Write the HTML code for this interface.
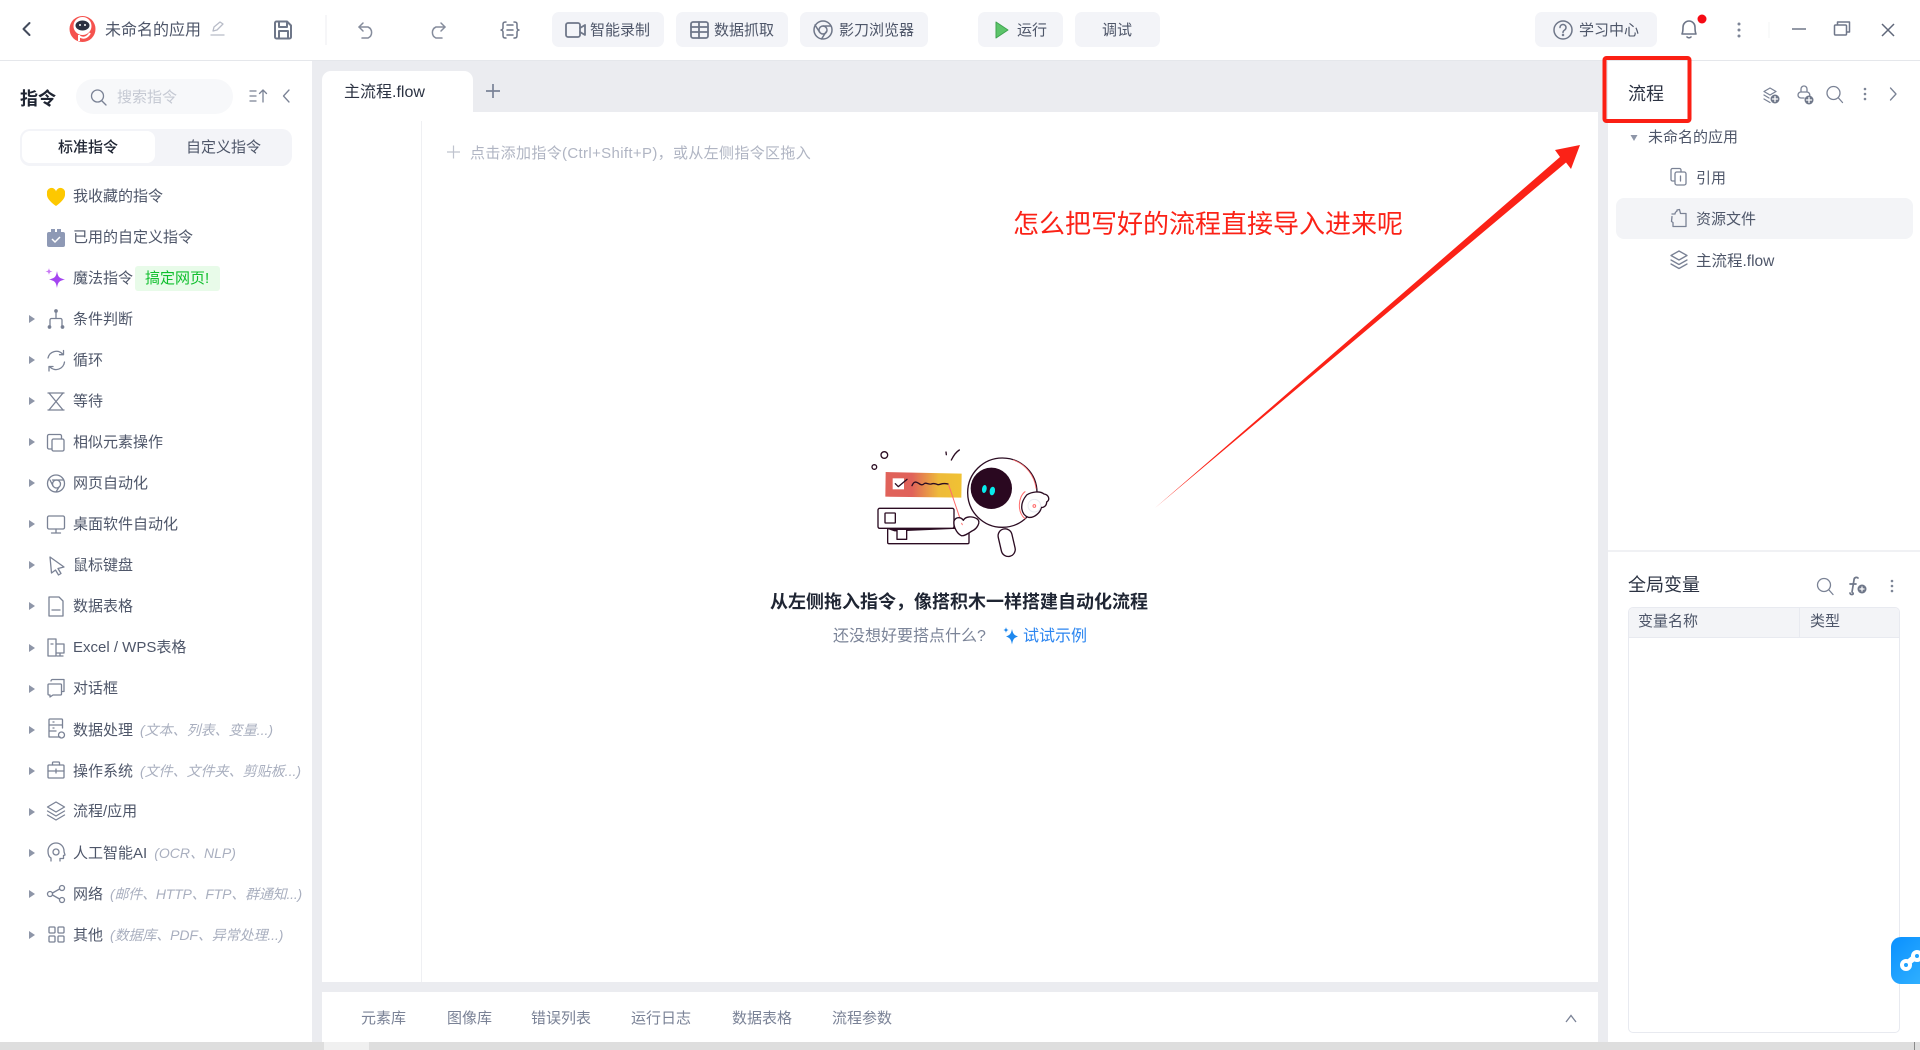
<!DOCTYPE html>
<html lang="zh">
<head>
<meta charset="utf-8">
<title>未命名的应用</title>
<style>
html,body{margin:0;padding:0;width:1920px;height:1050px;overflow:hidden;background:#ebecf0;font-family:"Liberation Sans","Noto Sans CJK SC",sans-serif;color:#4e5669}
.b{position:absolute}
.t{position:absolute;white-space:nowrap;line-height:24px;font-size:15px;margin-top:1px}
.btn{position:absolute;top:12px;height:35px;background:#f3f4f8;border-radius:7px}
.r{position:absolute;left:73px;white-space:nowrap;line-height:40px;height:40px;font-size:15px;color:#4e5669;margin-top:1px}
.r i{font-size:14px;color:#a9afbf;margin-left:7px;font-style:italic}
.tri{position:absolute;left:29px;width:0;height:0;border-left:6px solid #8e96a8;border-top:4.5px solid transparent;border-bottom:4.5px solid transparent}
svg.o{position:absolute;left:0;top:0}
.s{fill:none;stroke:#7a8295;stroke-width:1.3;stroke-linecap:round;stroke-linejoin:round}
</style>
</head>
<body>
<!-- panels -->
<div class="b" style="left:0;top:0;width:1920px;height:60px;background:#fff"></div>
<div class="b" style="left:0;top:60px;width:1920px;height:1px;background:#e5e7eb"></div>
<div class="b" style="left:0;top:61px;width:312px;height:981px;background:#fff"></div>
<div class="b" style="left:322px;top:71px;width:151px;height:45px;background:#fff;border-radius:9px 9px 0 0"></div>
<div class="b" style="left:322px;top:112px;width:1276px;height:870px;background:#fff"></div>
<div class="b" style="left:421px;top:121px;width:1px;height:861px;background:#eff0f3"></div>
<div class="b" style="left:322px;top:992px;width:1276px;height:50px;background:#fff"></div>
<div class="b" style="left:1608px;top:61px;width:312px;height:981px;background:#fff"></div>
<div class="b" style="left:1608px;top:550px;width:312px;height:2px;background:#f0f1f4"></div>
<div class="b" style="left:0;top:1042px;width:1920px;height:8px;background:#dedede"></div>
<div class="b" style="left:324px;top:1042px;width:45px;height:8px;background:#f0f0f0"></div>
<div class="b" style="left:1914px;top:1042px;width:1px;height:8px;background:#8a8a8a"></div>

<!-- header buttons -->
<div class="btn" style="left:552px;width:112px"></div>
<div class="btn" style="left:676px;width:112px"></div>
<div class="btn" style="left:800px;width:128px"></div>
<div class="btn" style="left:978px;width:85px"></div>
<div class="btn" style="left:1075px;width:85px"></div>
<div class="btn" style="left:1535px;width:122px"></div>
<div class="t" style="left:105px;top:18px;font-size:16px;color:#4e5669">未命名的应用</div>
<div class="t" style="left:590px;top:18px">智能录制</div>
<div class="t" style="left:714px;top:18px">数据抓取</div>
<div class="t" style="left:839px;top:18px">影刀浏览器</div>
<div class="t" style="left:1017px;top:18px">运行</div>
<div class="t" style="left:1102px;top:18px">调试</div>
<div class="t" style="left:1579px;top:18px">学习中心</div>

<!-- left panel -->
<div class="t" style="left:20px;top:86px;font-size:18px;font-weight:700;color:#1f2533">指令</div>
<div class="b" style="left:76px;top:79px;width:157px;height:35px;border-radius:18px;background:#f7f8fa"></div>
<div class="t" style="left:117px;top:85px;color:#c5c9d3">搜索指令</div>
<div class="b" style="left:20px;top:129px;width:272px;height:37px;border-radius:10px;background:#f3f4f8"></div>
<div class="b" style="left:22px;top:131px;width:133px;height:32px;border-radius:8px;background:#fff"></div>
<div class="t" style="left:58px;top:135px;font-weight:500;color:#1f2533">标准指令</div>
<div class="t" style="left:186px;top:135px">自定义指令</div>

<div class="r" style="top:176px">我收藏的指令</div>
<div class="r" style="top:217px">已用的自定义指令</div>
<div class="r" style="top:258px">魔法指令</div>
<div class="b" style="left:135px;top:266px;width:85px;height:25px;background:#e8fbe9;border-radius:3px"></div>
<div class="t" style="left:145px;top:266px;color:#0fbf2d">搞定网页!</div>
<div class="r" style="top:299px">条件判断</div>
<div class="r" style="top:340px">循环</div>
<div class="r" style="top:381px">等待</div>
<div class="r" style="top:422px">相似元素操作</div>
<div class="r" style="top:463px">网页自动化</div>
<div class="r" style="top:504px">桌面软件自动化</div>
<div class="r" style="top:545px">鼠标键盘</div>
<div class="r" style="top:586px">数据表格</div>
<div class="r" style="top:627px">Excel / WPS表格</div>
<div class="r" style="top:668px">对话框</div>
<div class="r" style="top:709px">数据处理<i>(文本、列表、变量...)</i></div>
<div class="r" style="top:750px">操作系统<i>(文件、文件夹、剪贴板...)</i></div>
<div class="r" style="top:791px">流程/应用</div>
<div class="r" style="top:832px">人工智能AI<i>(OCR、NLP)</i></div>
<div class="r" style="top:873px">网络<i style="letter-spacing:-.2px">(邮件、HTTP、FTP、群通知...)</i></div>
<div class="r" style="top:914px">其他<i style="letter-spacing:-.1px">(数据库、PDF、异常处理...)</i></div>

<div class="tri" style="top:315px"></div><div class="tri" style="top:356px"></div><div class="tri" style="top:397px"></div><div class="tri" style="top:438px"></div><div class="tri" style="top:479px"></div><div class="tri" style="top:520px"></div><div class="tri" style="top:561px"></div><div class="tri" style="top:602px"></div><div class="tri" style="top:644px"></div><div class="tri" style="top:685px"></div><div class="tri" style="top:726px"></div><div class="tri" style="top:767px"></div><div class="tri" style="top:808px"></div><div class="tri" style="top:849px"></div><div class="tri" style="top:890px"></div><div class="tri" style="top:931px"></div>

<!-- canvas -->
<div class="t" style="left:344px;top:80px;font-size:16px;color:#2b3242">主流程.flow</div>
<div class="t" style="left:470px;top:141px;color:#b0b5c3;letter-spacing:.34px">点击添加指令(Ctrl+Shift+P)，或从左侧指令区拖入</div>
<div class="t" style="left:770px;top:589px;font-size:18px;font-weight:700;color:#1f2533">从左侧拖入指令，像搭积木一样搭建自动化流程</div>
<div class="t" style="left:833px;top:624px;font-size:16px;color:#7b8498">还没想好要搭点什么?</div>
<div class="t" style="left:1023px;top:624px;font-size:16px;color:#2b85f0">试试示例</div>
<div class="t" style="left:1013px;top:206px;font-size:26px;line-height:34px;color:#fb2217">怎么把写好的流程直接导入进来呢</div>

<div class="t" style="left:361px;top:1006px;color:#7a8296">元素库</div>
<div class="t" style="left:447px;top:1006px;color:#7a8296">图像库</div>
<div class="t" style="left:531px;top:1006px;color:#7a8296">错误列表</div>
<div class="t" style="left:631px;top:1006px;color:#7a8296">运行日志</div>
<div class="t" style="left:732px;top:1006px;color:#7a8296">数据表格</div>
<div class="t" style="left:832px;top:1006px;color:#7a8296">流程参数</div>

<!-- right panel -->
<div class="t" style="left:1628px;top:81px;font-size:18px;color:#2b3242">流程</div>
<div class="b" style="left:1616px;top:198px;width:297px;height:41px;background:#f3f4f7;border-radius:8px"></div>
<div class="t" style="left:1648px;top:125px">未命名的应用</div>
<div class="t" style="left:1696px;top:166px">引用</div>
<div class="t" style="left:1696px;top:207px">资源文件</div>
<div class="t" style="left:1696px;top:249px;font-size:15.5px">主流程.flow</div>
<div class="t" style="left:1628px;top:572px;font-size:18px;color:#2b3242">全局变量</div>
<div class="b" style="left:1628px;top:607px;width:270px;height:424px;border:1px solid #e8eaf0;border-radius:5px;background:#fff;overflow:hidden">
  <div class="b" style="left:0;top:0;width:270px;height:29px;background:#f3f4f7;border-bottom:1px solid #e8eaf0"></div>
  <div class="b" style="left:170px;top:0;width:1px;height:29px;background:#e8eaf0"></div>
</div>
<div class="t" style="left:1638px;top:609px">变量名称</div>
<div class="t" style="left:1810px;top:609px">类型</div>
<div class="b" style="left:1891px;top:937px;width:29px;height:47px;border-radius:10px 0 0 10px;background:linear-gradient(135deg,#0a90ff,#2fafff)"></div>

<!-- icon overlay -->
<svg class="o" width="1920" height="1050" viewBox="0 0 1920 1050" xmlns="http://www.w3.org/2000/svg">
<defs>
<linearGradient id="g1" x1="0" x2="1" y1="0" y2="0"><stop offset="0.35" stop-color="#e0625a"/><stop offset="0.7" stop-color="#eeba3a"/><stop offset="1" stop-color="#f0c233"/></linearGradient>
</defs>

<!-- header -->
<path d="M29.5 23L23.5 29L29.5 35" fill="none" stroke="#434b5c" stroke-width="2" stroke-linecap="round" stroke-linejoin="round"/>
<g>
  <circle cx="82.5" cy="29" r="13" fill="#f5524e"/>
  <circle cx="82.5" cy="26" r="9" fill="#fff"/>
  <ellipse cx="82.5" cy="25.5" rx="7" ry="5" fill="#2b3040"/>
  <circle cx="80" cy="25" r="1" fill="#fff"/><circle cx="85" cy="25" r="1" fill="#fff"/>
  <path d="M79 35v6M79 36c4 3 8 2 11-3" fill="none" stroke="#fff" stroke-width="2"/>
</g>
<g class="s" style="stroke:#b8bcc8;stroke-width:1.3"><path d="M213 31l1-4 6-5 3 2-6 6z"/><path d="M211 35h13"/></g>
<g class="s" style="stroke-width:2;stroke:#6f7789"><path d="M275 23a1.5 1.5 0 0 1 1.5-1.5H287l4 4V37a1.500 1.500 0 0 1-1.500 1.500h-13A1.500 1.500 0 0 1 275 37z"/><path d="M279 22v5h8v-5M279 38v-7h9v7"/></g>
<path d="M326 15V45" stroke="#eceef1" stroke-width="1"/>
<g class="s" style="stroke:#858c9c;stroke-width:1.500" transform="translate(2 0)"><path d="M361 23l-4 4 4 4"/><path d="M357 27h9a6 6 0 0 1 0 11h-6"/></g>
<g class="s" style="stroke:#858c9c;stroke-width:1.500" transform="translate(-2 0)"><path d="M443 23l4 4-4 4"/><path d="M447 27h-9a6 6 0 0 0 0 11h6"/></g>
<g class="s" style="stroke:#6f7789;stroke-width:1.500"><path d="M506 22c-3 0-3 1-3 3v3c0 1-1 2-2 2 1 0 2 1 2 2v3c0 2 0 3 3 3M514 22c3 0 3 1 3 3v3c0 1 1 2 2 2-1 0-2 1-2 2v3c0 2 0 3-3 3"/><path d="M507 25h6M507 30h6M507 35h6"/></g>
<g class="s" style="stroke-width:1.800;stroke:#6f7789"><rect x="566" y="23" width="14" height="14" rx="2"/><path d="M580 28l5-3v10l-5-3"/></g>
<g class="s" style="stroke-width:1.800;stroke:#6f7789"><rect x="691" y="22" width="17" height="16" rx="2"/><path d="M691 27h17M691 32h17M699 22v16"/></g>
<g class="s" style="stroke:#6f7789;stroke-width:1.500"><circle cx="823" cy="30" r="9"/><circle cx="823" cy="30" r="4"/><path d="M823 26h8M819.500 32l-4.500-7M826 32l-4.500 7"/></g>
<path d="M996 22v16l12-8z" fill="#5cc46a" stroke="#3fa350" stroke-width="1" stroke-linejoin="round"/>
<g class="s" style="stroke:#6f7789;stroke-width:1.500"><circle cx="1563" cy="30" r="9"/><path d="M1560 27.500a3 3 0 1 1 4.500 2.600c-1 .6-1.500 1-1.500 2.400"/><circle cx="1563" cy="35" r=".5"/></g>
<g class="s" style="stroke-width:1.600;stroke:#6f7789"><path d="M1682 34c1-2 1-4 1-7a6 6 0 0 1 12 0c0 3 0 5 1 7z"/><path d="M1687 37a2.500 2 0 0 0 4 0"/></g>
<circle cx="1702" cy="19" r="4.500" fill="#f50a14"/>
<g fill="#7d8597"><circle cx="1739" cy="24" r="1.500"/><circle cx="1739" cy="30" r="1.500"/><circle cx="1739" cy="36" r="1.500"/></g>
<path d="M1769 22V38" stroke="#f3f4f6"/>
<path d="M1792 29h14" stroke="#6f7789" stroke-width="1.500"/>
<g class="s" style="stroke-linecap:butt;stroke:#6f7789;stroke-width:1.500"><rect x="1834.500" y="25" width="12" height="10" rx="1"/><path d="M1837.500 25v-3h12v10h-3"/></g>
<path d="M1882 24l12 12M1894 24l-12 12" stroke="#5f6779" stroke-width="1.500"/>

<!-- left top -->
<g class="s"><circle cx="97.500" cy="96" r="6"/><path d="M102 101l4 4"/></g>
<g class="s"><path d="M250 91h6M250 96h6M250 101h6M263 102V90M259.500 93.500L263 90l3.500 3.500"/></g>
<path d="M289 90l-5.500 6 5.500 6" class="s"/>

<!-- sidebar icons -->
<path d="M56 206c-10-7-9-11-9-12.500a4.500 4.500 0 0 1 9-2 4.500 4.500 0 0 1 9 2c0 1.500 1 5.500-9 12.500z" fill="#fdc800"/>
<path d="M47 234a2 2 0 0 1 2-2h14a2 2 0 0 1 2 2v11a2 2 0 0 1-2 2H49a2 2 0 0 1-2-2z" fill="#8e99b5"/>
<path d="M51 232v-3h4v3M57 232v-3h4v3" fill="#8e99b5"/>
<path d="M52 239l3 3 5-5" fill="none" stroke="#fff" stroke-width="1.500"/>
<g transform="translate(0 -1)">
<path d="M57 272c1 6 2 7 8 8.500-6 1.500-7 2.500-8 8.500-1-6-2-7-8-8.500 6-1.500 7-2.500 8-8.500z" fill="#a445f0"/>
<path d="M49 269c.4 2.500 1 3 3.500 3.500-2.500.5-3 1-3.500 3.500-.4-2.500-1-3-3.500-3.500 2.500-.5 3-1 3.500-3.500z" fill="#c878f5"/>
</g>
<g class="s" transform="translate(0 -1)"><path d="M56 314v5M50 327v-6a1.500 1.500 0 0 1 1.500-1.500h9a1.500 1.500 0 0 1 1.500 1.500v6"/><circle cx="56" cy="312" r="1.200" fill="#6f7789"/><circle cx="49.500" cy="328" r="1.200" fill="#6f7789"/><circle cx="62.500" cy="328" r="1.200" fill="#6f7789"/></g>
<g class="s"><path d="M48 358a8.500 8.500 0 0 1 14.500-4M64.500 362a8.500 8.500 0 0 1-14.500 5"/><path d="M63.500 350.500v4.200h-4M49 371v-4.500h4"/></g>
<g class="s"><path d="M48 393h16M48 410h16M49 393l7 8.500 7-8.500M49 410l7-8.500 7 8.500"/></g>
<g class="s" transform="translate(0 -1)"><path d="M52 450h-3a1.500 1.500 0 0 1-1.500-1.500V437a1.500 1.500 0 0 1 1.500-1.500h11a1.500 1.500 0 0 1 1.500 1.500v3"/><rect x="52" y="440" width="12" height="12" rx="1.500"/></g>
<g class="s"><circle cx="56" cy="483.500" r="8.500"/><circle cx="56.500" cy="484" r="4"/><path d="M52.500 480h11M53 486l-3-6M59 487l-3 5"/></g>
<g class="s" transform="translate(0 -1)"><rect x="47.500" y="517" width="17" height="13" rx="1.500"/><path d="M56 530v4M51.500 534h9"/></g>
<path class="s" d="M50 557l14 10-6 1.500 3 5-2.500 1.500-3-5-4 3z"/>
<g class="s"><path d="M49 597h10l4 4v15H49z"/><path d="M52 610h8"/></g>
<g class="s"><path d="M48 639h8v17h-8zM51 644h2M56 644h8v9h-8M60 653v3M57 656h6"/></g>
<g class="s"><path d="M51 681a1.500 1.500 0 0 1 1.500-1.500h11.500v12h-2M48 685a1 1 0 0 1 1-1h11.500a1 1 0 0 1 1 1v9a1 1 0 0 1-1 1H53l-3 2v-2h-1a1 1 0 0 1-1-1z"/></g>
<g class="s" transform="translate(0 6)"><path d="M60 731h-11v-17a1 1 0 0 1 1-1h11.500a1 1 0 0 1 1 1v8M49 719h13M49 725h7M53 716h1M53 722h1"/><circle cx="61.500" cy="729" r="3"/></g>
<g class="s"><rect x="48" y="765" width="16" height="13" rx="1"/><path d="M48 771h16M56 769v4M52.500 765v-2a1 1 0 0 1 1-1h5a1 1 0 0 1 1 1v2"/></g>
<g class="s"><path d="M56 802l8.500 5-8.500 5-8.500-5zM47.500 811l8.500 5 8.500-5M47.500 815l8.500 5 8.500-5"/></g>
<g class="s" transform="translate(0 1)"><path d="M51 860v-3c-2-1-3-4-3-7a8 8 0 0 1 16 0c0 2 1 3 1 4l-1.500.5v3H60v2.500"/><circle cx="56" cy="851" r="3"/></g>
<g class="s"><circle cx="50" cy="894" r="2.500"/><circle cx="62" cy="888" r="2.500"/><circle cx="62" cy="900" r="2.500"/><path d="M52.500 893l7-4M52.500 895l7 4"/></g>
<g class="s"><rect x="49" y="927" width="6" height="6" rx="1"/><rect x="58" y="927" width="6" height="6" rx="1"/><rect x="49" y="936" width="6" height="6" rx="1"/><rect x="58" y="936" width="6" height="6" rx="1"/></g>

<!-- tab plus, hint plus -->
<path d="M486 91h14M493 84v14" stroke="#7a8296" stroke-width="1.700"/>
<path d="M447 153h13M453.500 146.500v13" stroke="#bfc3ce" stroke-width="1.200" transform="translate(0 -1)"/>
<path d="M1566 1022l5-6.500 5 6.500" fill="none" stroke="#7a8296" stroke-width="1.300"/>

<!-- sparkle -->
<g transform="translate(0 2)">
<path d="M1012 627c1 5 2 6 6 7.500-4 1.500-5 2.500-6 8-1-5.500-2-6.500-6-8 4-1.500 5-2.500 6-7.500z" fill="#1e88ee"/>
<path d="M1006 625c.3 2 1 2.500 2.500 3-1.500.5-2.200 1-2.500 3-.3-2-1-2.500-2.500-3 1.500-.5 2.200-1 2.500-3z" fill="#1e88ee"/>
</g>

<!-- illustration -->
<g transform="translate(850 440) scale(.33333)" fill="none" stroke="#2b0c22" stroke-width="4" stroke-linecap="round" stroke-linejoin="round">
  <circle cx="103" cy="45" r="10"/>
  <circle cx="73" cy="81" r="7"/>
  <path d="M288 36l1 8M304 60c6-12 14-24 24-30"/>
  <path d="M107 96l228 5-1 72-228-3z" fill="url(#g1)" stroke="none"/>
  <rect x="128" y="115" width="34" height="33" fill="#fff" stroke="none"/>
  <path d="M136 131l9 9 26-22M186 137c6-14 12-12 20-7 8 6 12 6 18 0 6-2 12 4 20 2 8-4 12 0 20 2 8 0 12-6 30-2"/>
  <path d="M296 135l39 115" stroke="#ff6b6b" stroke-width="3"/>
  <rect x="113" y="265" width="244" height="46" rx="4" fill="#fff"/>
  <path d="M113 265h195l-165 7-10 0z" fill="#2b0c22"/>
  <rect x="141" y="268" width="29" height="30" fill="#fff"/>
  <rect x="84" y="205" width="228" height="60" rx="5" fill="#fff"/>
  <rect x="105" y="219" width="31" height="30" rx="2"/>
  <circle cx="457" cy="158" r="104" fill="#fff"/>
  <path d="M490 60a104 104 0 0 1 68 85" stroke="#ff6b6b" stroke-width="2.500"/>
  <circle cx="424" cy="145" r="62" fill="#2a0820" stroke="none"/>
  <ellipse cx="403" cy="147" rx="7" ry="12" transform="rotate(10 403 147)" fill="#07ecec" stroke="none"/>
  <ellipse cx="427" cy="153" rx="8" ry="13" transform="rotate(10 427 153)" fill="#07ecec" stroke="none"/>
  <path d="M525 155C505 170 500 215 525 236" fill="#fff" stroke="#ff6b6b" stroke-width="3"/>
  <path d="M530 165C545 155 570 152 582 162C598 165 600 180 590 186C590 198 580 204 574 202C572 218 552 235 535 232C515 225 505 195 530 165Z" fill="#fff"/>
  <circle cx="553" cy="197" r="19" stroke="#e8ebf2" stroke-width="3"/>
  <circle cx="553" cy="198" r="4" stroke="#ff6b6b" stroke-width="3"/>
  <path d="M334 287c-16-8-24-30-22-44 6-14 22-12 28-2 6-12 26-14 42-4 12 10-2 30-16 36-10 6-22 16-32 14z" fill="#fff"/>
  <path d="M335 250l2 4" stroke="#ff6b6b" stroke-width="3"/>
  <rect x="449" y="266" width="42" height="84" rx="21" transform="rotate(-13 470 308)" fill="#fff"/>
</g>

<!-- annotation arrow -->
<path d="M1155 508L1560 157L1555 150L1580 145L1571 169L1566 162.500Z" fill="#fb2217"/>
<rect x="1604.500" y="58" width="85" height="63" rx="2" fill="none" stroke="#fb1f14" stroke-width="4"/>

<!-- right header icons -->
<g class="s"><path d="M1770 88l6 3.500-6 3.500-6-3.500zM1764 95l5 3M1764 99l6 3.500"/><circle cx="1775" cy="99" r="4.500" fill="#6f7789" stroke="none"/><path d="M1775 96.500v5M1772.500 99h5" stroke="#fff"/></g>
<g class="s" transform="translate(-1 0)"><path d="M1802 92v-3a3 3 0 0 1 6 0v3h-6a3 3 0 0 0 0 6h3M1808 92a3 3 0 0 1 2 5"/><circle cx="1810" cy="100" r="4.500" fill="#6f7789" stroke="none"/><path d="M1810 97.500v5M1807.500 100h5" stroke="#fff"/></g>
<g class="s"><circle cx="1833.500" cy="93" r="6.500"/><path d="M1838.500 98l4 4.500"/></g>
<g fill="#7d8597"><circle cx="1865" cy="89" r="1.300"/><circle cx="1865" cy="94" r="1.300"/><circle cx="1865" cy="99" r="1.300"/></g>
<path class="s" d="M1890.500 88l5.500 6-5.500 6"/>

<!-- tree icons -->
<path d="M1630.500 135h7l-3.500 6z" fill="#8e96a8"/>
<g class="s"><path d="M1674 181h-1.500a1.500 1.500 0 0 1-1.500-1.500V170a1.500 1.500 0 0 1 1.500-1.500h7a1.500 1.500 0 0 1 1.500 1.500v2"/><rect x="1675" y="172" width="11" height="13" rx="1.800"/><path d="M1680.500 176v5"/></g>
<g class="s"><path d="M1672 214h3c0-2 1-2 2-3v-1l2.500-.500 1 4H1686v13h-13v-4l-1.500-1 .5-5"/></g>
<g class="s" transform="translate(0 -1)"><path d="M1679 252l8 4.500-8 4.500-8-4.500zM1671 261l8 4.500 8-4.500M1671 265l8 4.500 8-4.500"/></g>

<!-- var icons -->
<g class="s"><circle cx="1824" cy="585" r="6.500"/><path d="M1829 590l4 4.500"/></g>
<path d="M1853 593c1 2-3 2-3 0M1852 592l2-12c0-3 3-3 4-2M1850 584h6" fill="none" stroke="#6f7789" stroke-width="1.700" stroke-linecap="round"/>
<circle cx="1862" cy="589" r="4.500" fill="#6f7789"/><path d="M1862 586.500v5M1859.500 589h5" stroke="#fff" stroke-width="1.200"/>
<g fill="#7d8597"><circle cx="1892" cy="581" r="1.300"/><circle cx="1892" cy="586" r="1.300"/><circle cx="1892" cy="591" r="1.300"/></g>

<!-- float -->
<g fill="none" stroke="#fff" stroke-width="4"><circle cx="1906" cy="965" r="4"/><circle cx="1917" cy="956" r="4"/></g>
<path d="M1909 962l6-5" stroke="#fff" stroke-width="6"/>
</svg>
</body>
</html>
